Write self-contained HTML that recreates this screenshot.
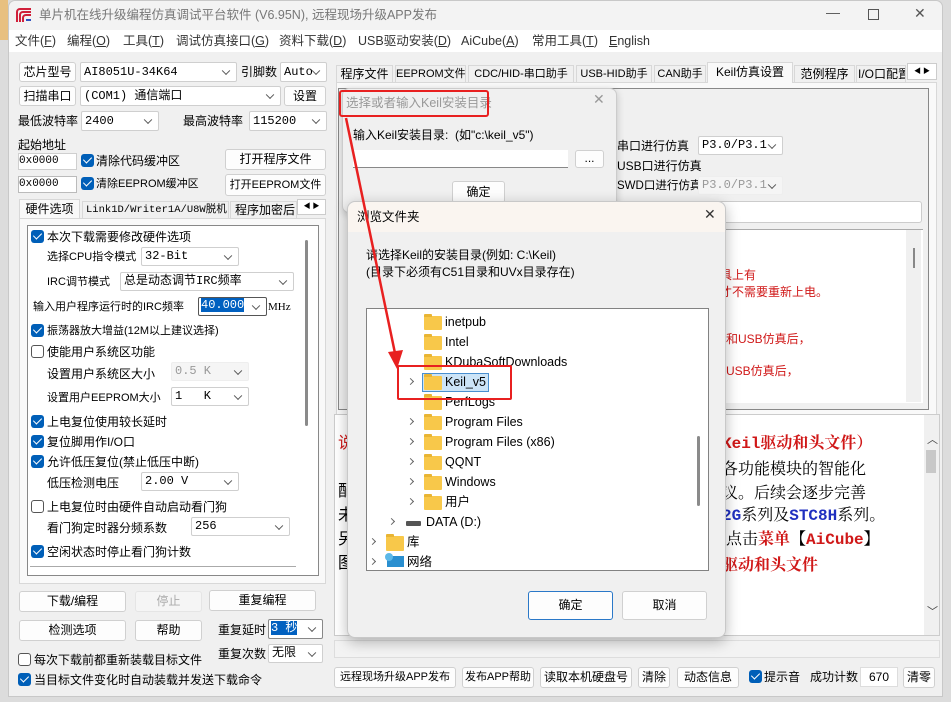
<!DOCTYPE html><html><head><meta charset="utf-8"><style>
*{box-sizing:border-box;margin:0;padding:0}
body{width:951px;height:702px;overflow:hidden;background:#dcdcdc;font-family:"Liberation Sans","Noto Sans CJK SC",sans-serif;font-size:12px;color:#000;position:relative}
.a{position:absolute;white-space:nowrap;line-height:16px}
.btn{position:absolute;background:#fdfdfd;border:1px solid #d0d0d0;border-radius:3px;text-align:center;font-size:12px;white-space:nowrap;overflow:hidden}
.cb{position:absolute;background:#fff;border:1px solid #cfcfcf;border-radius:2px;font-size:12px;padding-left:3px;font-family:"Liberation Mono","Noto Sans CJK SC",monospace;white-space:nowrap}
.cb:after{content:"";position:absolute;right:7px;top:50%;width:5px;height:5px;border-right:1px solid #555;border-bottom:1px solid #555;transform:translateY(-70%) rotate(45deg)}
.inp{position:absolute;background:#fff;border:1px solid #cfcfcf;font-size:11px;font-family:"Liberation Mono",monospace;white-space:nowrap}
.dis{background:#f5f5f5;color:#999}
.ck{position:absolute;width:13px;height:13px;border-radius:3px;background:#005fb8}
.ck:after{content:"";position:absolute;left:4px;top:1px;width:4px;height:7px;border-right:1.6px solid #fff;border-bottom:1.6px solid #fff;transform:rotate(45deg)}
.uk{position:absolute;width:13px;height:13px;border-radius:3px;border:1px solid #555;background:#fff}
.fd{position:absolute;width:18px;height:14px;background:#f8c84a;border-radius:1px}
.fd:before{content:"";position:absolute;left:0;top:-2px;width:8px;height:3px;background:#e9b534;border-radius:1px 1px 0 0}
.chev{position:absolute;width:5px;height:5px;border-right:1px solid #666;border-top:1px solid #666;transform:rotate(45deg)}
.r{color:#d01818}
.s{font-size:11px}
.m{position:absolute;top:33px;font-size:12.5px;color:#333;line-height:16px;white-space:nowrap}
</style></head><body>
<div class="a" style="left:8px;top:0;width:935px;height:697px;background:#f0f0f0;border:1px solid #c8c8c8;border-radius:7px 7px 0 0"></div>
<div class="a" style="left:9px;top:1px;width:933px;height:29px;background:#f3f3f3;border-radius:7px 7px 0 0"></div>
<div class="a" style="left:0;top:0;width:8px;height:40px;background:#e8c080"></div>
<svg class="a" style="left:16px;top:8px" width="16" height="15"><path d="M1 14V4a3 3 0 0 1 3-3h11M4 14V7a3 3 0 0 1 3-3h8M7 14V10a3 3 0 0 1 3-3h5" stroke="#d0203a" stroke-width="2" fill="none"/><path d="M10 12h5" stroke="#3050c0" stroke-width="2"/></svg>
<div class="a" style="left:39px;top:7px;font-size:12.5px;color:#777">单片机在线升级编程仿真调试平台软件 (V6.95N), 远程现场升级APP发布</div>
<div class="a" style="left:826px;top:4px;font-size:14px;color:#555">—</div>
<div class="a" style="left:868px;top:9px;width:11px;height:11px;border:1px solid #555"></div>
<div class="a" style="left:914px;top:5px;font-size:14px;color:#555">✕</div>
<div class="a" style="left:9px;top:30px;width:933px;height:22px;background:#fff"></div>
<div class="m" style="left:15px">文件(<u>F</u>)</div>
<div class="m" style="left:67px">编程(<u>O</u>)</div>
<div class="m" style="left:123px">工具(<u>T</u>)</div>
<div class="m" style="left:176px">调试仿真接口(<u>G</u>)</div>
<div class="m" style="left:279px">资料下载(<u>D</u>)</div>
<div class="m" style="left:358px">USB驱动安装(<u>D</u>)</div>
<div class="m" style="left:461px">AiCube(<u>A</u>)</div>
<div class="m" style="left:532px">常用工具(<u>T</u>)</div>
<div class="m" style="left:609px"><u>E</u>nglish</div>

<!-- left panel -->
<div class="btn" style="left:19px;top:62px;width:57px;height:20px;line-height:18px">芯片型号</div>
<div class="cb" style="left:80px;top:62px;width:157px;height:20px;line-height:18px">AI8051U-34K64</div>
<div class="a" style="left:241px;top:64px">引脚数</div>
<div class="cb" style="left:280px;top:62px;width:47px;height:20px;line-height:18px">Auto</div>
<div class="btn" style="left:19px;top:86px;width:57px;height:20px;line-height:18px">扫描串口</div>
<div class="cb" style="left:80px;top:86px;width:201px;height:20px;line-height:18px">(COM1) 通信端口</div>
<div class="btn" style="left:284px;top:86px;width:42px;height:20px;line-height:18px">设置</div>
<div class="a" style="left:18px;top:113px">最低波特率</div>
<div class="cb" style="left:81px;top:111px;width:78px;height:20px;line-height:18px">2400</div>
<div class="a" style="left:183px;top:113px">最高波特率</div>
<div class="cb" style="left:249px;top:111px;width:78px;height:20px;line-height:18px">115200</div>
<div class="a" style="left:18px;top:137px">起始地址</div>
<div class="inp" style="left:18px;top:153px;width:59px;height:17px;line-height:15px">0x0000</div>
<div class="ck" style="left:81px;top:154px"></div><div class="a" style="left:96px;top:153px">清除代码缓冲区</div>
<div class="btn" style="left:225px;top:149px;width:101px;height:21px;line-height:19px">打开程序文件</div>
<div class="inp" style="left:18px;top:176px;width:59px;height:17px;line-height:15px;border-color:#bbb">0x0000</div>
<div class="ck" style="left:81px;top:177px"></div><div class="a s" style="left:96px;top:176px">清除EEPROM缓冲区</div>
<div class="btn s" style="left:225px;top:174px;width:101px;height:22px;line-height:20px">打开EEPROM文件</div>
<div class="a" style="left:19px;top:199px;width:61px;height:20px;background:#f9f9f9;border:1px solid #d8d8d8;border-bottom:none;text-align:center;line-height:18px">硬件选项</div>
<div class="a" style="left:82px;top:201px;width:147px;height:18px;border:1px solid #d8d8d8;border-bottom:none;line-height:16px;padding-left:3px;font-family:'Liberation Mono','Noto Sans CJK SC',monospace;font-size:10.5px;overflow:hidden">Link1D/Writer1A/U8W脱机</div>
<div class="a" style="left:230px;top:201px;width:67px;height:18px;border:1px solid #d8d8d8;border-bottom:none;line-height:16px;padding-left:4px;overflow:hidden">程序加密后</div>
<div class="a" style="left:297px;top:199px;width:29px;height:16px;border:1px solid #ccc;background:#fff;font-size:7px;line-height:14px;text-align:center">◀ ▶</div>
<div class="a" style="left:19px;top:218px;width:307px;height:366px;background:#f9f9f9;border:1px solid #d8d8d8"></div>
<div class="a" style="left:27px;top:225px;width:292px;height:351px;background:#fff;border:1px solid #888"></div>
<div class="a" style="left:305px;top:240px;width:3px;height:186px;background:#8a8a8a;border-radius:2px"></div>
<div class="a" style="left:30px;top:566px;width:266px;height:1px;background:#aaa"></div>
<div class="ck" style="left:31px;top:230px"></div><div class="a" style="left:47px;top:229px">本次下载需要修改硬件选项</div>
<div class="a s" style="left:47px;top:249px">选择CPU指令模式</div>
<div class="cb" style="left:141px;top:247px;width:98px;height:19px;line-height:17px">32-Bit</div>
<div class="a s" style="left:47px;top:274px">IRC调节模式</div>
<div class="cb" style="left:120px;top:272px;width:174px;height:19px;line-height:17px">总是动态调节IRC频率</div>
<div class="a s" style="left:33px;top:299px">输入用户程序运行时的IRC频率</div>
<div class="cb" style="left:198px;top:297px;width:69px;height:19px;line-height:15px;border-color:#555;padding-left:2px"><span style="background:#0060c0;color:#fff">40.000</span></div>
<div class="a" style="left:268px;top:299px;font-size:11px;font-family:'Liberation Serif',serif">MHz</div>
<div class="ck" style="left:31px;top:324px"></div><div class="a s" style="left:47px;top:323px">振荡器放大增益(12M以上建议选择)</div>
<div class="uk" style="left:31px;top:345px"></div><div class="a" style="left:47px;top:344px">使能用户系统区功能</div>
<div class="a" style="left:47px;top:366px">设置用户系统区大小</div>
<div class="cb dis" style="left:171px;top:362px;width:78px;height:19px;line-height:17px;border-color:#eee">0.5 K</div>
<div class="a s" style="left:47px;top:390px">设置用户EEPROM大小</div>
<div class="cb" style="left:171px;top:387px;width:78px;height:19px;line-height:17px">1&nbsp;&nbsp; K</div>
<div class="ck" style="left:31px;top:415px"></div><div class="a" style="left:47px;top:414px">上电复位使用较长延时</div>
<div class="ck" style="left:31px;top:435px"></div><div class="a" style="left:47px;top:434px">复位脚用作I/O口</div>
<div class="ck" style="left:31px;top:455px"></div><div class="a" style="left:47px;top:454px">允许低压复位(禁止低压中断)</div>
<div class="a" style="left:47px;top:475px">低压检测电压</div>
<div class="cb" style="left:141px;top:472px;width:98px;height:19px;line-height:17px">2.00 V</div>
<div class="uk" style="left:31px;top:500px"></div><div class="a" style="left:47px;top:499px">上电复位时由硬件自动启动看门狗</div>
<div class="a" style="left:47px;top:520px">看门狗定时器分频系数</div>
<div class="cb" style="left:191px;top:517px;width:99px;height:19px;line-height:17px">256</div>
<div class="ck" style="left:31px;top:545px"></div><div class="a" style="left:47px;top:544px">空闲状态时停止看门狗计数</div>
<div class="btn" style="left:19px;top:591px;width:107px;height:21px;line-height:19px">下载/编程</div>
<div class="btn" style="left:135px;top:591px;width:67px;height:21px;line-height:19px;color:#aaa;background:#f5f5f5;border-color:#e5e5e5">停止</div>
<div class="btn" style="left:209px;top:590px;width:107px;height:21px;line-height:19px">重复编程</div>
<div class="btn" style="left:19px;top:620px;width:107px;height:21px;line-height:19px">检测选项</div>
<div class="btn" style="left:135px;top:620px;width:67px;height:21px;line-height:19px">帮助</div>
<div class="a" style="left:218px;top:622px">重复延时</div>
<div class="cb" style="left:268px;top:619px;width:55px;height:20px;line-height:16px;border-color:#888;padding-left:2px"><span style="background:#0060c0;color:#fff">3 秒</span></div>
<div class="a" style="left:218px;top:646px">重复次数</div>
<div class="cb" style="left:268px;top:644px;width:55px;height:19px;line-height:17px">无限</div>
<div class="uk" style="left:18px;top:653px"></div><div class="a" style="left:34px;top:652px">每次下载前都重新装载目标文件</div>
<div class="ck" style="left:18px;top:673px"></div><div class="a" style="left:34px;top:672px">当目标文件变化时自动装载并发送下载命令</div>

<!-- right tabs -->
<div class="a" style="left:336px;top:64px;width:601px;height:19px;border-bottom:1px solid #d8d8d8"></div>
<div class="a" style="left:336px;top:65px;width:57px;height:18px;border:1px solid #d8d8d8;line-height:16px;text-align:center">程序文件</div>
<div class="a" style="left:395px;top:65px;width:71px;height:18px;border:1px solid #d8d8d8;line-height:16px;text-align:center;font-size:11px">EEPROM文件</div>
<div class="a" style="left:468px;top:65px;width:106px;height:18px;border:1px solid #d8d8d8;line-height:16px;text-align:center;font-size:11px">CDC/HID-串口助手</div>
<div class="a" style="left:576px;top:65px;width:76px;height:18px;border:1px solid #d8d8d8;line-height:16px;text-align:center;font-size:11px">USB-HID助手</div>
<div class="a" style="left:654px;top:65px;width:52px;height:18px;border:1px solid #d8d8d8;line-height:16px;text-align:center;font-size:11px">CAN助手</div>
<div class="a" style="left:707px;top:62px;width:86px;height:22px;border:1px solid #d8d8d8;border-bottom:none;background:#f9f9f9;line-height:18px;text-align:center">Keil仿真设置</div>
<div class="a" style="left:794px;top:65px;width:61px;height:18px;border:1px solid #d8d8d8;line-height:16px;text-align:center">范例程序</div>
<div class="a" style="left:856px;top:65px;width:50px;height:18px;border:1px solid #d8d8d8;line-height:16px;padding-left:1px;overflow:hidden">I/O口配置</div>
<div class="a" style="left:907px;top:63px;width:30px;height:17px;border:1px solid #ccc;background:#fff;font-size:7px;line-height:15px;text-align:center">◀ ▶</div>
<div class="a" style="left:336px;top:83px;width:601px;height:336px;background:#f9f9f9;border:1px solid #d8d8d8;border-top:none"></div>
<div class="a" style="left:338px;top:88px;width:591px;height:322px;border:1px solid #888;background:#f0f0f0"></div>
<div class="a" style="left:617px;top:138px">串口进行仿真</div>
<div class="cb" style="left:698px;top:136px;width:85px;height:19px;line-height:17px">P3.0/P3.1</div>
<div class="a" style="left:617px;top:158px">USB口进行仿真</div>
<div class="a" style="left:617px;top:178px;font-size:11.5px">SWD口进行仿真</div>
<div class="cb dis" style="left:698px;top:176px;width:85px;height:19px;line-height:17px;border-color:#eee">P3.0/P3.1</div>
<div class="a" style="left:600px;top:201px;width:322px;height:22px;background:#fff;border:1px solid #ccc;border-radius:3px"></div>
<div class="a" style="left:700px;top:229px;width:223px;height:174px;background:#fff;border-top:1px solid #aaa;border-left:1px solid #aaa"></div>
<div class="a" style="left:906px;top:230px;width:15px;height:172px;background:#f0f0f0"></div>
<div class="a" style="left:913px;top:248px;width:2px;height:20px;background:#888"></div>
<div class="a r" style="left:720px;top:267px">具上有</div>
<div class="a r" style="left:720px;top:284px">才不需要重新上电。</div>
<div class="a r" style="left:726px;top:331px">和USB仿真后，</div>
<div class="a r" style="left:726px;top:363px">USB仿真后，</div>
<!-- lower panel -->
<div class="a" style="left:334px;top:414px;width:606px;height:222px;background:#fff;border:1px solid #ccc"></div>
<div class="a" style="left:924px;top:415px;width:15px;height:220px;background:#f0f0f0"></div>
<div class="a" style="left:926px;top:450px;width:10px;height:23px;background:#c8c8c8"></div>
<div class="a" style="left:927px;top:432px;font-size:11px;color:#444">︿</div>
<div class="a" style="left:927px;top:604px;font-size:11px;color:#444">﹀</div>
<div class="a r" style="left:722px;top:434px;font-size:16px;line-height:20px;font-weight:bold;font-family:'Liberation Mono','Noto Serif CJK SC',serif">Keil驱动和头文件）</div>
<div class="a" style="left:722px;top:458px;font-size:16px;line-height:20px;font-family:'Noto Serif CJK SC',serif">各功能模块的智能化</div>
<div class="a" style="left:722px;top:482px;font-size:16px;line-height:20px;font-family:'Noto Serif CJK SC',serif">议。后续会逐步完善</div>
<div class="a" style="left:722px;top:506px;font-size:16px;line-height:20px;font-family:'Liberation Mono','Noto Serif CJK SC',serif"><b style="color:#2030c0">2G</b>系列及<b style="color:#2030c0">STC8H</b>系列。</div>
<div class="a" style="left:726px;top:530px;font-size:16px;line-height:20px;font-family:'Liberation Mono','Noto Serif CJK SC',serif">点击<b class="r">菜单</b><b>【</b><b class="r">AiCube</b><b>】</b></div>
<div class="a r" style="left:722px;top:554px;font-size:16px;line-height:20px;font-weight:bold;font-family:'Noto Serif CJK SC',serif">驱动和头文件</div>
<div class="a r" style="left:338px;top:434px;font-size:16px;line-height:20px">说</div>
<div class="a" style="left:338px;top:482px;font-size:16px;line-height:20px">配</div>
<div class="a" style="left:338px;top:506px;font-size:16px;line-height:20px">未</div>
<div class="a" style="left:338px;top:530px;font-size:16px;line-height:20px">另</div>
<div class="a" style="left:338px;top:554px;font-size:16px;line-height:20px">图</div>
<div class="a" style="left:334px;top:640px;width:606px;height:18px;background:#f3f3f3;border:1px solid #ddd"></div>
<!-- bottom bar -->
<div class="btn s" style="left:334px;top:667px;width:122px;height:21px;line-height:19px">远程现场升级APP发布</div>
<div class="btn s" style="left:462px;top:667px;width:72px;height:21px;line-height:19px">发布APP帮助</div>
<div class="btn" style="left:540px;top:667px;width:92px;height:21px;line-height:19px">读取本机硬盘号</div>
<div class="btn" style="left:638px;top:667px;width:32px;height:21px;line-height:19px">清除</div>
<div class="btn" style="left:677px;top:667px;width:62px;height:21px;line-height:19px">动态信息</div>
<div class="ck" style="left:749px;top:670px"></div><div class="a" style="left:764px;top:669px">提示音</div>
<div class="a" style="left:810px;top:669px">成功计数</div>
<div class="a" style="left:860px;top:667px;width:38px;height:20px;background:#fff;border:1px solid #ddd;line-height:18px;padding-left:8px">670</div>
<div class="btn" style="left:903px;top:667px;width:32px;height:21px;line-height:19px">清零</div>

<!-- keil dialog -->
<div class="a" style="left:342px;top:88px;width:275px;height:125px;background:#f0f0f0;border:1px solid #ccc;border-radius:7px;box-shadow:0 2px 8px rgba(0,0,0,.2)"></div>
<div class="a" style="left:346px;top:95px;font-size:12.5px;color:#999">选择或者输入Keil安装目录</div>
<div class="a" style="left:593px;top:91px;font-size:14px;color:#999">✕</div>
<div class="a" style="left:353px;top:127px">输入Keil安装目录:&nbsp; (如"c:\keil_v5")</div>
<div class="a" style="left:353px;top:150px;width:215px;height:18px;background:#fff;border-bottom:1px solid #888"></div>
<div class="btn" style="left:575px;top:150px;width:29px;height:18px;line-height:14px">...</div>
<div class="btn" style="left:452px;top:181px;width:53px;height:22px;line-height:20px">确定</div>
<div class="a" style="left:339px;top:90px;width:150px;height:27px;border:2px solid #e82020;border-radius:3px"></div>

<!-- browse dialog -->
<div class="a" style="left:347px;top:201px;width:379px;height:437px;background:#f0f0f0;border:1px solid #c8c8c8;border-radius:8px;box-shadow:0 4px 14px rgba(0,0,0,.28)"></div>
<div class="a" style="left:348px;top:202px;width:377px;height:30px;background:#faf5f0;border-radius:8px 8px 0 0"></div>
<div class="a" style="left:357px;top:209px;font-size:12.5px">浏览文件夹</div>
<div class="a" style="left:704px;top:206px;font-size:14px;color:#333">✕</div>
<div class="a" style="left:366px;top:247px">请选择Keil的安装目录(例如: C:\Keil)</div>
<div class="a" style="left:366px;top:264px">(目录下必须有C51目录和UVx目录存在)</div>
<div class="a" style="left:366px;top:308px;width:343px;height:263px;background:#fff;border:1px solid #828282"></div>
<div class="a" style="left:697px;top:436px;width:3px;height:70px;background:#8a8a8a;border-radius:2px"></div>
<div class="fd" style="left:424px;top:316px"></div><div class="a" style="left:445px;top:314px;font-size:12.5px">inetpub</div>
<div class="fd" style="left:424px;top:336px"></div><div class="a" style="left:445px;top:334px;font-size:12.5px">Intel</div>
<div class="fd" style="left:424px;top:356px"></div><div class="a" style="left:445px;top:354px;font-size:12.5px">KDubaSoftDownloads</div>
<div class="a" style="left:422px;top:373px;width:67px;height:19px;background:#cce4f7;border:1px solid #4a90d0"></div>
<div class="chev" style="left:408px;top:379px"></div><div class="fd" style="left:424px;top:376px"></div><div class="a" style="left:445px;top:374px;font-size:12.5px">Keil_v5</div>
<div class="fd" style="left:424px;top:396px"></div><div class="a" style="left:445px;top:394px;font-size:12.5px">PerfLogs</div>
<div class="chev" style="left:408px;top:419px"></div><div class="fd" style="left:424px;top:416px"></div><div class="a" style="left:445px;top:414px;font-size:12.5px">Program Files</div>
<div class="chev" style="left:408px;top:439px"></div><div class="fd" style="left:424px;top:436px"></div><div class="a" style="left:445px;top:434px;font-size:12.5px">Program Files (x86)</div>
<div class="chev" style="left:408px;top:459px"></div><div class="fd" style="left:424px;top:456px"></div><div class="a" style="left:445px;top:454px;font-size:12.5px">QQNT</div>
<div class="chev" style="left:408px;top:479px"></div><div class="fd" style="left:424px;top:476px"></div><div class="a" style="left:445px;top:474px;font-size:12.5px">Windows</div>
<div class="chev" style="left:408px;top:499px"></div><div class="fd" style="left:424px;top:496px"></div><div class="a" style="left:445px;top:494px;font-size:12.5px">用户</div>
<div class="chev" style="left:389px;top:519px"></div><div class="a" style="left:406px;top:521px;width:15px;height:5px;background:#555;border-radius:1px"></div><div class="a" style="left:426px;top:514px;font-size:12.5px">DATA (D:)</div>
<div class="chev" style="left:370px;top:539px"></div><div class="fd" style="left:386px;top:536px;height:15px"></div><div class="a" style="left:407px;top:534px;font-size:12.5px">库</div>
<div class="chev" style="left:370px;top:559px"></div><div class="a" style="left:387px;top:556px;width:17px;height:11px;background:#2a8fd0"></div><div class="a" style="left:385px;top:553px;width:8px;height:8px;background:#5cb8e8;border-radius:50%"></div><div class="a" style="left:407px;top:554px;font-size:12.5px">网络</div>
<div class="btn" style="left:528px;top:591px;width:85px;height:29px;line-height:27px;border-color:#2a78c8">确定</div>
<div class="btn" style="left:622px;top:591px;width:85px;height:29px;line-height:27px">取消</div>
<div class="a" style="left:397px;top:365px;width:115px;height:35px;border:2px solid #e82020;border-radius:2px"></div>
<svg class="a" style="left:0;top:0" width="951" height="702"><line x1="346" y1="118" x2="396" y2="358" stroke="#e82020" stroke-width="2.5"/><path d="M388 352L397 369L403 350Z" fill="#e82020"/></svg>
</body></html>
